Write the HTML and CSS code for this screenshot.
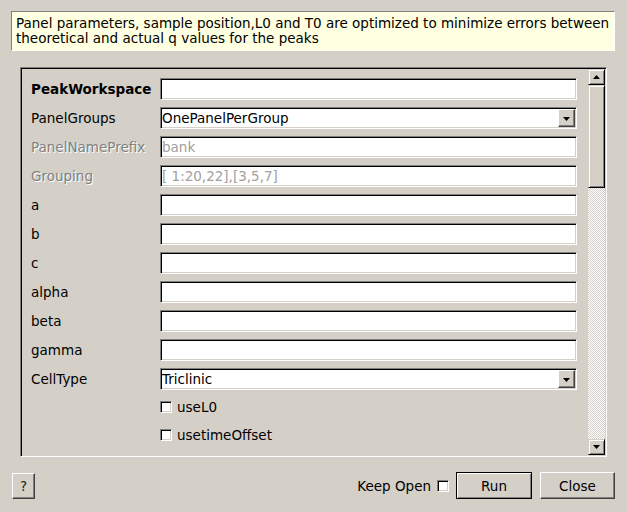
FILE: index.html
```html
<!DOCTYPE html>
<html>
<head>
<meta charset="utf-8">
<link rel="stylesheet" href="styles.css">
</head>
<body>
<div class="dialog">
  <div class="banner">Panel parameters, sample position,L0 and T0 are optimized to minimize errors between<br>theoretical and actual q values for the peaks</div>
  <div class="frame">
    <div class="props">
      <div class="lbl bold">PeakWorkspace</div><div class="edit"></div>
      <div class="lbl">PanelGroups</div>
      <div class="edit combo"><span class="val">OnePanelPerGroup</span><span class="cbtn"><svg width="7" height="4" viewBox="0 0 7 4"><polygon points="0,0 7,0 3.5,4" fill="#000"/></svg></span></div>
      <div class="lbl dis">PanelNamePrefix</div><div class="edit"><span class="val dtext">bank</span></div>
      <div class="lbl dis">Grouping</div><div class="edit"><span class="val dtext">[ 1:20,22],[3,5,7]</span></div>
      <div class="lbl">a</div><div class="edit"></div>
      <div class="lbl">b</div><div class="edit"></div>
      <div class="lbl">c</div><div class="edit"></div>
      <div class="lbl">alpha</div><div class="edit"></div>
      <div class="lbl">beta</div><div class="edit"></div>
      <div class="lbl">gamma</div><div class="edit"></div>
      <div class="lbl">CellType</div>
      <div class="edit combo"><span class="val">Triclinic</span><span class="cbtn"><svg width="7" height="4" viewBox="0 0 7 4"><polygon points="0,0 7,0 3.5,4" fill="#000"/></svg></span></div>
      <div class="chkrow"><span class="cb"></span><span>useL0</span></div>
      <div class="chkrow"><span class="cb"></span><span>usetimeOffset</span></div>
    </div>
    <div class="vscroll">
      <div class="sbtn"><svg width="7" height="4" viewBox="0 0 7 4"><polygon points="0,4 7,4 3.5,0" fill="#000"/></svg></div>
      <div class="thumb"></div>
      <div class="trough"></div>
      <div class="sbtn"><svg width="7" height="4" viewBox="0 0 7 4"><polygon points="0,0 7,0 3.5,4" fill="#000"/></svg></div>
    </div>
  </div>
  <div class="footer">
    <div class="btn help">?</div>
    <div class="spacer"></div>
    <div class="keep">Keep Open</div>
    <span class="cb keepcb"></span>
    <div class="btn run">Run</div>
    <div class="btn close">Close</div>
  </div>
</div>
</body>
</html>
```

FILE: styles.css
```css
html, body {
  margin: 0;
  padding: 0;
  background: #d4d0c8;
}
body {
  font-family: "DejaVu Sans", sans-serif;
  font-size: 13.5px;
  color: #000;
  width: 627px;
  height: 512px;
  overflow: hidden;
}
.dialog {
  display: flex;
  flex-direction: column;
}
.banner {
  margin: 11px 12px 0 11px;
  height: 40px;
  box-sizing: border-box;
  background: #ffffe1;
  border: 1px solid;
  border-color: #808080 #ffffff #ffffff #808080;
  padding: 4px 0 0 4px;
  line-height: 15px;
  white-space: nowrap;
}
.frame {
  margin: 16px 0 0 20px;
  width: 587px;
  height: 390px;
  box-sizing: border-box;
  border: 1px solid;
  border-color: #808080 #ffffff #ffffff #808080;
  box-shadow: inset 1px 1px 0 #000000, inset -1px -1px 0 #d4d0c8;
  padding: 1px;
  display: flex;
}
.props {
  flex: 1;
  display: grid;
  grid-template-columns: 129px 417px;
  grid-auto-rows: 22px;
  row-gap: 7px;
  padding: 9px 0 0 9px;
  align-content: start;
}
.lbl {
  display: flex;
  align-items: center;
  white-space: nowrap;
}
.bold { font-weight: bold; }
.dis {
  color: #808080;
  text-shadow: 1px 1px 0 #ffffff;
}
.edit {
  box-sizing: border-box;
  height: 22px;
  background: #ffffff;
  border: 1px solid;
  border-color: #808080 #ffffff #ffffff #808080;
  box-shadow: inset 1px 1px 0 #000000, inset -1px -1px 0 #d4d0c8;
  display: flex;
  align-items: center;
}
.val {
  padding-left: 1px;
  white-space: nowrap;
}
.dtext { color: #a0a0a0; }
.combo { justify-content: space-between; }
.cbtn {
  width: 17px;
  height: 18px;
  margin-right: 1px;
  box-sizing: border-box;
  background: #d4d0c8;
  border: 1px solid;
  border-color: #ffffff #404040 #404040 #ffffff;
  box-shadow: inset -1px -1px 0 #808080;
  display: flex;
  align-items: center;
  justify-content: center;
}
.cbtn svg { display: block; margin-top: 1px; }
.chkrow {
  grid-column: 2;
  height: 20px;
  display: flex;
  align-items: center;
  gap: 5px;
}
.chkrow + .chkrow { margin-top: -1px; }
.cb {
  width: 12px;
  height: 12px;
  box-sizing: border-box;
  background: #ffffff;
  border: 1px solid;
  border-color: #808080 #ffffff #ffffff #808080;
  box-shadow: inset 1px 1px 0 #000000, inset -1px -1px 0 #d4d0c8;
  flex: none;
}
.vscroll {
  width: 17px;
  display: flex;
  flex-direction: column;
}
.sbtn, .thumb {
  box-sizing: border-box;
  background: #d4d0c8;
  border: 1px solid;
  border-color: #d4d0c8 #000000 #000000 #d4d0c8;
  box-shadow: inset 1px 1px 0 #ffffff, inset -1px -1px 0 #808080;
}
.sbtn {
  height: 16px;
  display: flex;
  align-items: center;
  justify-content: center;
}
.sbtn svg { display: block; }
.thumb { height: 103px; }
.trough {
  flex: 1;
  background-color: #d4d0c8;
  background-image: conic-gradient(#ffffff 25%, #d4d0c8 0 50%, #ffffff 0 75%, #d4d0c8 0);
  background-size: 2px 2px;
}
.footer {
  margin-top: 15px;
  height: 27px;
  padding: 0 12px;
  display: flex;
  align-items: center;
}
.spacer { flex: 1; }
.btn {
  box-sizing: border-box;
  height: 27px;
  background: #d4d0c8;
  border: 1px solid;
  border-color: #ffffff #404040 #404040 #ffffff;
  box-shadow: inset -1px -1px 0 #808080;
  display: flex;
  align-items: center;
  justify-content: center;
}
.help { width: 23px; height: 26px; margin-top: 1px; color: #202020; }
.keep { margin-right: 6px; }
.keepcb { margin-right: 7px; }
.run {
  width: 76px;
  border-color: #000000;
  box-shadow: inset 1px 1px 0 #ffffff, inset -1px -1px 0 #808080;
  margin-right: 8px;
}
.close { width: 75px; }
```
